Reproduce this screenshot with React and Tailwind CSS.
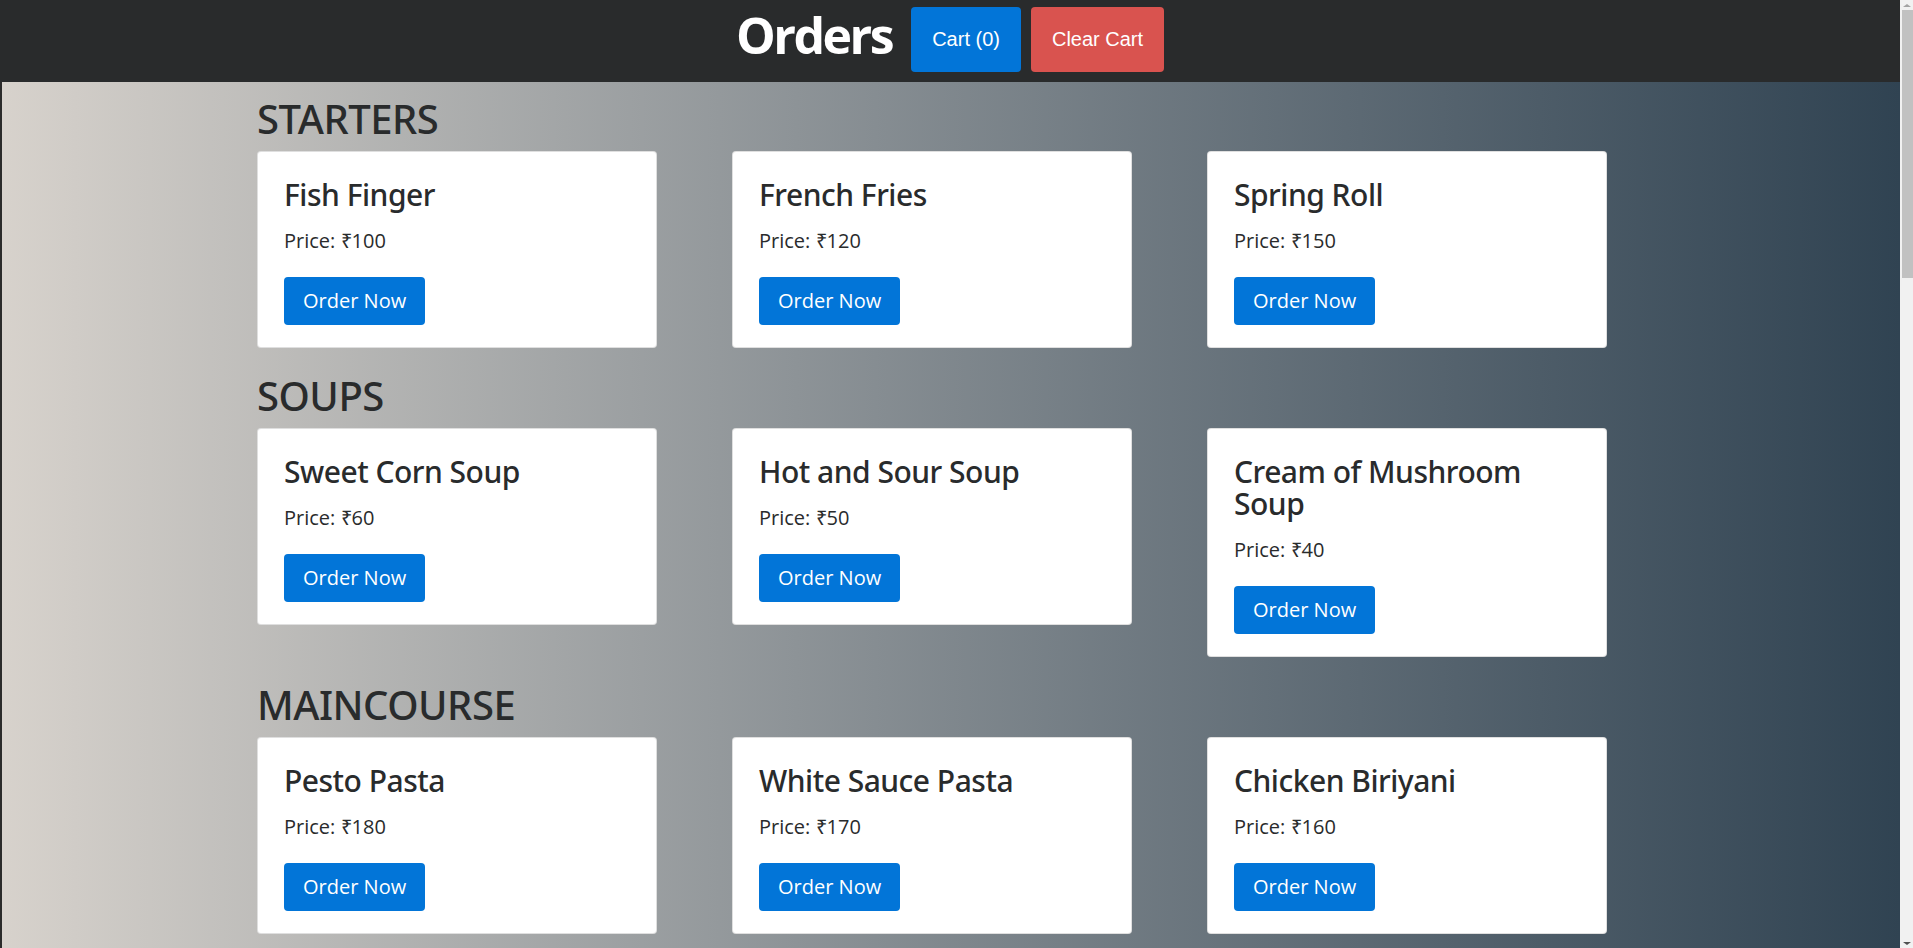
import React from "react";

const menu = [
  {
    title: "STARTERS",
    items: [
      { name: "Fish Finger", price: 100 },
      { name: "French Fries", price: 120 },
      { name: "Spring Roll", price: 150 },
    ],
  },
  {
    title: "SOUPS",
    items: [
      { name: "Sweet Corn Soup", price: 60 },
      { name: "Hot and Sour Soup", price: 50 },
      { name: "Cream of Mushroom Soup", price: 40 },
    ],
  },
  {
    title: "MAINCOURSE",
    items: [
      { name: "Pesto Pasta", price: 180 },
      { name: "White Sauce Pasta", price: 170 },
      { name: "Chicken Biriyani", price: 160 },
    ],
  },
];

function FoodCard({ item }) {
  return (
    <div className="w-[400px] bg-white border border-black/[0.125] rounded-[4px] pt-[27px] px-[26px] pb-[22px]">
      <h4 className="font-['Noto_Sans',sans-serif] text-[30px] leading-[32px] font-medium tracking-[-0.5px] mb-[15px]">{item.name}</h4>
      <p className="text-[20px] leading-[30px] mb-[21px]">Price: ₹{item.price}</p>
      <button className="bg-[#0275d8] text-white text-[20px] leading-[30px] px-[19px] py-[9px] rounded-[4px]">
        Order Now
      </button>
    </div>
  );
}

function Scrollbar() {
  return (
    <div className="w-[13px] h-full bg-[#f1f1f1] flex flex-col items-end shrink-0">
      <div className="h-[10px] w-full flex items-center justify-center">
        <div className="w-0 h-0 border-l-[4px] border-r-[4px] border-b-[3px] border-l-transparent border-r-transparent border-b-[#a3a3a3]" />
      </div>
      <div className="w-[11px] h-[268px] bg-[#c1c1c1]" />
      <div className="flex-1" />
      <div className="h-[10px] w-full flex items-center justify-center">
        <div className="w-0 h-0 border-l-[4px] border-r-[4px] border-t-[3px] border-l-transparent border-r-transparent border-t-[#505050]" />
      </div>
    </div>
  );
}

export default function App() {
  return (
    <div className="h-screen w-full flex overflow-hidden text-[#292b2c] font-['Open_Sans',sans-serif]">
      <div className="flex-1 flex flex-col min-w-0">
        {/* Header */}
        <header className="h-[82px] shrink-0 bg-[#292b2c] flex justify-center items-start pt-[7px]">
          <h1 className="text-white text-[50px] leading-[57px] font-bold tracking-[-2.5px]">Orders</h1>
          <button className="ml-[19px] bg-[#0275d8] text-white font-['Liberation_Sans',Arial,sans-serif] text-[20px] leading-[23px] px-[21px] py-[21px] rounded-[4px]">
            Cart (0)
          </button>
          <button className="ml-[10px] bg-[#d9534f] text-white font-['Liberation_Sans',Arial,sans-serif] text-[20px] leading-[23px] px-[21px] py-[21px] rounded-[4px]">
            Clear Cart
          </button>
        </header>

        {/* Menu */}
        <main className="flex-1 border-l-2 border-[#2b2b2b] bg-gradient-to-r from-[#d7d2cc] to-[#304352] pt-[13px] pl-[255px]">
          {menu.map((section) => (
            <section key={section.title} className="mb-[24px]">
              <h2 className="font-['Noto_Sans',sans-serif] text-[40px] leading-[48px] font-medium tracking-[-0.5px] mb-[8px]">{section.title}</h2>
              <div className="flex items-start gap-[75px]">
                {section.items.map((item) => (
                  <FoodCard key={item.name} item={item} />
                ))}
              </div>
            </section>
          ))}
        </main>
      </div>
      <Scrollbar />
    </div>
  );
}
